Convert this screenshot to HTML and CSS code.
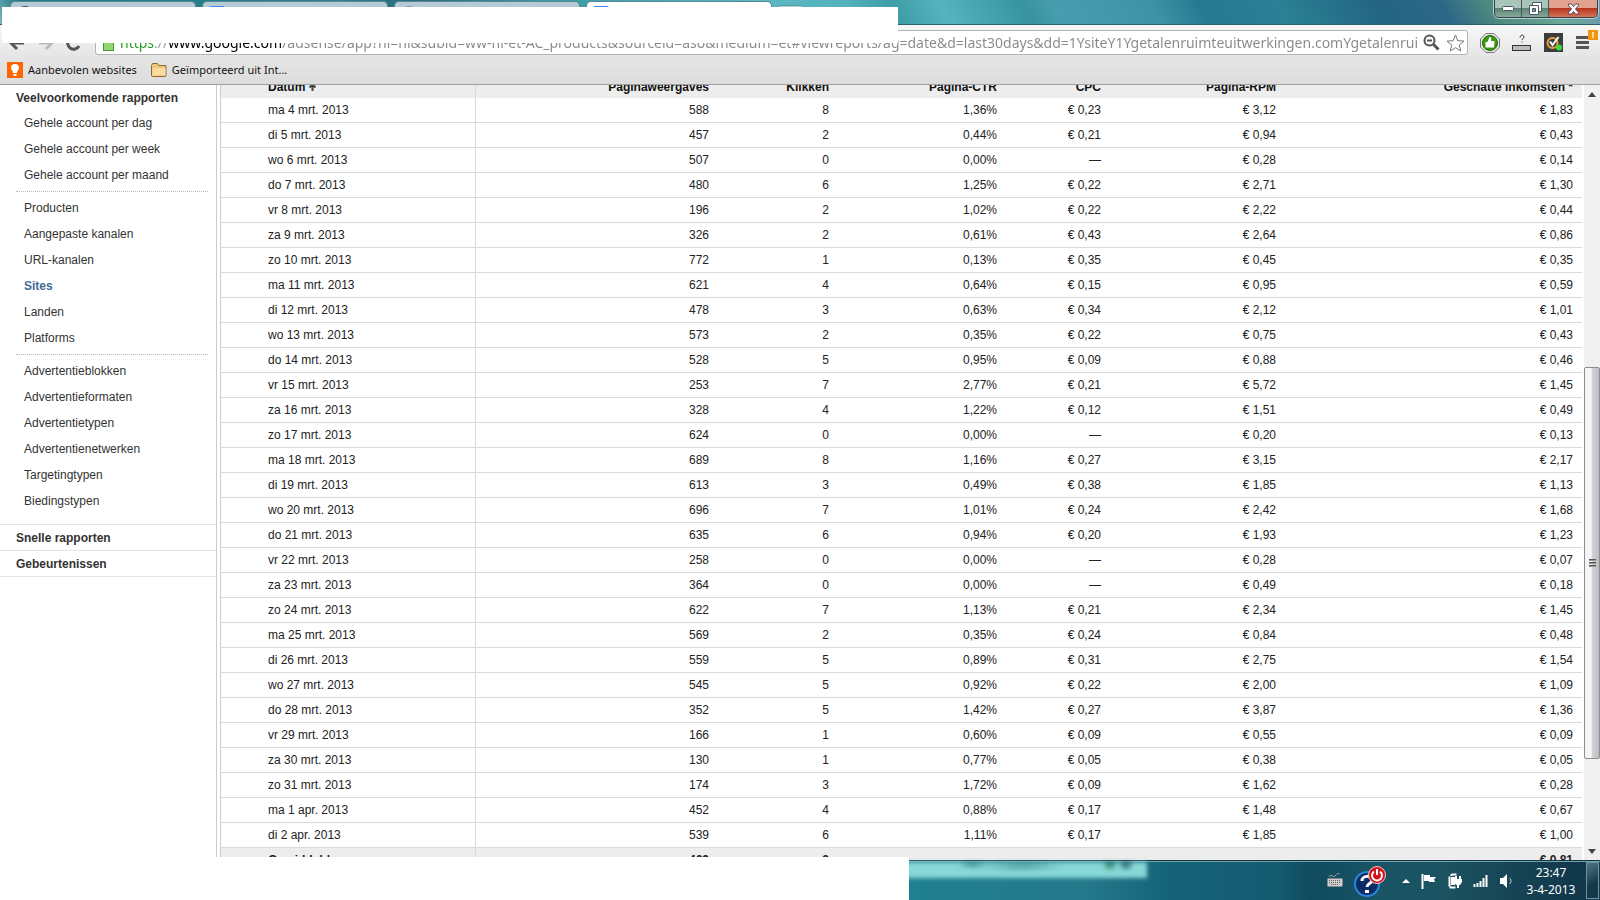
FILE: index.html
```html
<!DOCTYPE html>
<html lang="nl">
<head>
    <meta charset="UTF-8">
    <meta name="viewport" content="width=device-width, initial-scale=1.0">
    <title>Google AdSense</title>
    <link rel="stylesheet" href="styles.css">
</head>
<body>
    <!-- Browser window -->
    <header class="browser">
        <div class="titlebar">
            <div class="tabs">
                <div class="tab"><span class="favicon dark"></span></div>
                <div class="tab"><span class="favicon blue"></span></div>
                <div class="tab"><span class="favicon grey"></span></div>
                <div class="tab active"><span class="favicon blue"></span></div>
                <div class="new-tab"></div>
            </div>
            <div class="window-buttons">
                <button class="win-button" aria-label="Minimaliseren">
                    <svg width="12" height="6" viewBox="0 0 12 6"><rect x="0.5" y="0.5" width="11" height="4" rx="1" fill="#fff" stroke="#4a5566"/></svg>
                </button>
                <button class="win-button" aria-label="Verkleinen">
                    <svg width="13" height="13" viewBox="0 0 13 13"><path d="M3.500 0.500h9v9h-9z" fill="#fff" stroke="#4a5566"/><path d="M0.500 3.500h9v9h-9z" fill="#fff" stroke="#4a5566"/><path d="M3.500 6.500h3v3h-3z" fill="#7a9a98" stroke="#4a5566"/></svg>
                </button>
                <button class="win-button close" aria-label="Sluiten">
                    <svg width="13" height="12" viewBox="0 0 13 12"><path d="M1.500 1h3l2 2.500 2-2.500h3v1.500L8.500 6l3 3.500V11h-3l-2-2.500-2 2.500h-3V9.500l3-3.500-3-3.500z" fill="#fff" stroke="#58485a"/></svg>
                </button>
            </div>
        </div>

        <div class="toolbar">
            <button class="nav-button" aria-label="Vorige">
                <svg width="18" height="16" viewBox="0 0 18 16"><path d="M16 8H4M9 2L3 8l6 6" fill="none" stroke="#555" stroke-width="3"/></svg>
            </button>
            <button class="nav-button" aria-label="Volgende">
                <svg width="18" height="16" viewBox="0 0 18 16"><path d="M2 8h12M9 2l6 6-6 6" fill="none" stroke="#bbb" stroke-width="3"/></svg>
            </button>
            <button class="nav-button" aria-label="Vernieuwen">
                <svg width="16" height="16" viewBox="0 0 16 16"><path d="M13 11A6 6 0 1 1 12 4" fill="none" stroke="#555" stroke-width="3"/><path d="M14 1v6H8z" fill="#555"/></svg>
            </button>
            <div class="omnibox">
                <svg width="11" height="16" viewBox="0 0 11 16"><path d="M2.500 7V4a3 3 0 0 1 6 0v3" fill="none" stroke="#777" stroke-width="2"/><rect x="0.5" y="6.500" width="10" height="9" fill="#92d66f" stroke="#4a9a32"/></svg>
                <input class="url" type="text" aria-label="Adres" value="https://www.google.com/adsense/app?hl=nl&amp;subid=ww-nl-et-AC_products&amp;sourceid=aso&amp;medium=et#viewreports/ag=date&amp;d=last30days&amp;dd=1YsiteY1Ygetalenruimteuitwerkingen.comYgetalenruimteuitwerkingen.com">
                <svg width="17" height="17" viewBox="0 0 17 17"><circle cx="6.500" cy="6.500" r="5" fill="#fff" stroke="#555" stroke-width="2"/><path d="M4 6.500h5" stroke="#555" stroke-width="2"/><path d="M10.500 10.500l5 5" stroke="#555" stroke-width="3"/></svg>
                <svg width="19" height="18" viewBox="0 0 19 18"><path d="M9.500 1l2.300 5.700 6.200.4-4.800 3.900 1.600 6-5.300-3.300L4.200 17l1.600-6L1 7.100l6.200-.4z" fill="#fff" stroke="#777"/></svg>
            </div>
            <button class="tool-button" aria-label="WOT">
                <svg width="20" height="20" viewBox="0 0 20 20"><path d="M6 .5h8L19.500 6v8L14 19.500H6L.5 14V6z" fill="#e8e8e8" stroke="#777"/><circle cx="10" cy="10" r="7.500" fill="#3a9a10" stroke="#1f6a05"/><path d="M5.500 9h2l2-5c2 0 1.800 2.500 1.500 4h3.500L14 14.500H5.500z" fill="#fff"/></svg>
            </button>
            <button class="tool-button" aria-label="PageRank">
                <svg width="20" height="18" viewBox="0 0 20 18"><path d="M8 3.500c0-3 4-3 4-.5 0 1.500-2 1.500-2 3" fill="none" stroke="#333"/><path d="M9.500 7.500h1v1h-1z" fill="#333"/><rect x="0.5" y="11.500" width="18" height="5" fill="#bbb" stroke="#333"/></svg>
            </button>
            <button class="tool-button" aria-label="Norton">
                <svg width="19" height="19" viewBox="0 0 19 19"><rect width="19" height="19" fill="#3c3c3c"/><circle cx="8.500" cy="10" r="5" fill="none" stroke="#e8a13a" stroke-width="2"/><path d="M6 8.500L8.500 12l6-8" fill="none" stroke="#fff" stroke-width="2"/><circle cx="15" cy="14.500" r="3" fill="#3ddc3d"/></svg>
            </button>
            <button class="menu-button" aria-label="Menu">
                <svg width="13" height="13" viewBox="0 0 13 13"><path d="M0 1.500h13M0 6.500h13M0 11.500h13" stroke="#555" stroke-width="3"/></svg>
                <span class="badge">!</span>
            </button>
        </div>

        <div class="bookmarks">
            <a class="bookmark" href="#">
                <svg width="16" height="16" viewBox="0 0 16 16"><rect width="16" height="16" fill="#f60"/><path d="M8 2a4 4 0 0 0-4 4c0 2 2 2.500 2 5h4c0-2.500 2-3 2-5a4 4 0 0 0-4-4zM6.500 12h3v2h-3z" fill="#fff"/></svg>
                <span>Aanbevolen websites</span>
            </a>
            <a class="bookmark" href="#">
                <svg width="16" height="14" viewBox="0 0 16 14"><path d="M.5 2.500l1-2h5l1 2h7.500v10a1 1 0 0 1-1 1h-12.500a1 1 0 0 1-1-1z" fill="#f0c674" stroke="#8a6a3a"/><path d="M1.500 5h13v7.500h-13z" fill="#fbdca0"/></svg>
                <span>Geïmporteerd uit Int...</span>
            </a>
        </div>
        <div class="cover cover-top"></div>
    </header>

    <main class="page">
        <!-- Report menu -->
        <nav class="sidebar">
            <h2>Veelvoorkomende rapporten</h2>
            <ul>
                <li><a href="#">Gehele account per dag</a></li>
                <li><a href="#">Gehele account per week</a></li>
                <li><a href="#">Gehele account per maand</a></li>
            </ul>
            <ul>
                <li><a href="#">Producten</a></li>
                <li><a href="#">Aangepaste kanalen</a></li>
                <li><a href="#">URL-kanalen</a></li>
                <li><a class="selected" href="#">Sites</a></li>
                <li><a href="#">Landen</a></li>
                <li><a href="#">Platforms</a></li>
            </ul>
            <ul>
                <li><a href="#">Advertentieblokken</a></li>
                <li><a href="#">Advertentieformaten</a></li>
                <li><a href="#">Advertentietypen</a></li>
                <li><a href="#">Advertentienetwerken</a></li>
                <li><a href="#">Targetingtypen</a></li>
                <li><a href="#">Biedingstypen</a></li>
            </ul>
            <div class="sections">
                <a href="#">Snelle rapporten</a>
                <a href="#">Gebeurtenissen</a>
            </div>
        </nav>

        <!-- Report table -->
        <div class="report">
            <table>
                <colgroup>
                    <col class="col-date"><col class="col-views"><col class="col-clicks"><col class="col-ctr"><col class="col-cpc"><col class="col-rpm"><col>
                </colgroup>
                <thead>
                    <tr><th>Datum <svg width="7" height="8" viewBox="0 0 7 8"><path d="M3.500 8V2M.5 4.500l3-3 3 3" fill="none" stroke="#444" stroke-width="2"/></svg></th><th>Paginaweergaves</th><th>Klikken</th><th>Pagina-CTR</th><th>CPC</th><th>Pagina-RPM</th><th>Geschatte inkomsten *</th></tr>
                </thead>
                <tbody>
                    <tr><td>ma 4 mrt. 2013</td><td>588</td><td>8</td><td>1,36%</td><td>€ 0,23</td><td>€ 3,12</td><td>€ 1,83</td></tr>
                    <tr><td>di 5 mrt. 2013</td><td>457</td><td>2</td><td>0,44%</td><td>€ 0,21</td><td>€ 0,94</td><td>€ 0,43</td></tr>
                    <tr><td>wo 6 mrt. 2013</td><td>507</td><td>0</td><td>0,00%</td><td>—</td><td>€ 0,28</td><td>€ 0,14</td></tr>
                    <tr><td>do 7 mrt. 2013</td><td>480</td><td>6</td><td>1,25%</td><td>€ 0,22</td><td>€ 2,71</td><td>€ 1,30</td></tr>
                    <tr><td>vr 8 mrt. 2013</td><td>196</td><td>2</td><td>1,02%</td><td>€ 0,22</td><td>€ 2,22</td><td>€ 0,44</td></tr>
                    <tr><td>za 9 mrt. 2013</td><td>326</td><td>2</td><td>0,61%</td><td>€ 0,43</td><td>€ 2,64</td><td>€ 0,86</td></tr>
                    <tr><td>zo 10 mrt. 2013</td><td>772</td><td>1</td><td>0,13%</td><td>€ 0,35</td><td>€ 0,45</td><td>€ 0,35</td></tr>
                    <tr><td>ma 11 mrt. 2013</td><td>621</td><td>4</td><td>0,64%</td><td>€ 0,15</td><td>€ 0,95</td><td>€ 0,59</td></tr>
                    <tr><td>di 12 mrt. 2013</td><td>478</td><td>3</td><td>0,63%</td><td>€ 0,34</td><td>€ 2,12</td><td>€ 1,01</td></tr>
                    <tr><td>wo 13 mrt. 2013</td><td>573</td><td>2</td><td>0,35%</td><td>€ 0,22</td><td>€ 0,75</td><td>€ 0,43</td></tr>
                    <tr><td>do 14 mrt. 2013</td><td>528</td><td>5</td><td>0,95%</td><td>€ 0,09</td><td>€ 0,88</td><td>€ 0,46</td></tr>
                    <tr><td>vr 15 mrt. 2013</td><td>253</td><td>7</td><td>2,77%</td><td>€ 0,21</td><td>€ 5,72</td><td>€ 1,45</td></tr>
                    <tr><td>za 16 mrt. 2013</td><td>328</td><td>4</td><td>1,22%</td><td>€ 0,12</td><td>€ 1,51</td><td>€ 0,49</td></tr>
                    <tr><td>zo 17 mrt. 2013</td><td>624</td><td>0</td><td>0,00%</td><td>—</td><td>€ 0,20</td><td>€ 0,13</td></tr>
                    <tr><td>ma 18 mrt. 2013</td><td>689</td><td>8</td><td>1,16%</td><td>€ 0,27</td><td>€ 3,15</td><td>€ 2,17</td></tr>
                    <tr><td>di 19 mrt. 2013</td><td>613</td><td>3</td><td>0,49%</td><td>€ 0,38</td><td>€ 1,85</td><td>€ 1,13</td></tr>
                    <tr><td>wo 20 mrt. 2013</td><td>696</td><td>7</td><td>1,01%</td><td>€ 0,24</td><td>€ 2,42</td><td>€ 1,68</td></tr>
                    <tr><td>do 21 mrt. 2013</td><td>635</td><td>6</td><td>0,94%</td><td>€ 0,20</td><td>€ 1,93</td><td>€ 1,23</td></tr>
                    <tr><td>vr 22 mrt. 2013</td><td>258</td><td>0</td><td>0,00%</td><td>—</td><td>€ 0,28</td><td>€ 0,07</td></tr>
                    <tr><td>za 23 mrt. 2013</td><td>364</td><td>0</td><td>0,00%</td><td>—</td><td>€ 0,49</td><td>€ 0,18</td></tr>
                    <tr><td>zo 24 mrt. 2013</td><td>622</td><td>7</td><td>1,13%</td><td>€ 0,21</td><td>€ 2,34</td><td>€ 1,45</td></tr>
                    <tr><td>ma 25 mrt. 2013</td><td>569</td><td>2</td><td>0,35%</td><td>€ 0,24</td><td>€ 0,84</td><td>€ 0,48</td></tr>
                    <tr><td>di 26 mrt. 2013</td><td>559</td><td>5</td><td>0,89%</td><td>€ 0,31</td><td>€ 2,75</td><td>€ 1,54</td></tr>
                    <tr><td>wo 27 mrt. 2013</td><td>545</td><td>5</td><td>0,92%</td><td>€ 0,22</td><td>€ 2,00</td><td>€ 1,09</td></tr>
                    <tr><td>do 28 mrt. 2013</td><td>352</td><td>5</td><td>1,42%</td><td>€ 0,27</td><td>€ 3,87</td><td>€ 1,36</td></tr>
                    <tr><td>vr 29 mrt. 2013</td><td>166</td><td>1</td><td>0,60%</td><td>€ 0,09</td><td>€ 0,55</td><td>€ 0,09</td></tr>
                    <tr><td>za 30 mrt. 2013</td><td>130</td><td>1</td><td>0,77%</td><td>€ 0,05</td><td>€ 0,38</td><td>€ 0,05</td></tr>
                    <tr><td>zo 31 mrt. 2013</td><td>174</td><td>3</td><td>1,72%</td><td>€ 0,09</td><td>€ 1,62</td><td>€ 0,28</td></tr>
                    <tr><td>ma 1 apr. 2013</td><td>452</td><td>4</td><td>0,88%</td><td>€ 0,17</td><td>€ 1,48</td><td>€ 0,67</td></tr>
                    <tr><td>di 2 apr. 2013</td><td>539</td><td>6</td><td>1,11%</td><td>€ 0,17</td><td>€ 1,85</td><td>€ 1,00</td></tr>
                </tbody>
                <tfoot>
                    <tr><td>Gemiddelden</td><td>469</td><td>3</td><td>—</td><td>—</td><td>—</td><td>€ 0,81</td></tr>
                </tfoot>
            </table>
        </div>

        <div class="scrollbar">
            <svg width="8" height="5" viewBox="0 0 8 5"><path d="M4 0l4 5H0z" fill="#444"/></svg>
            <div class="track">
                <div class="thumb"><i></i><i></i><i></i></div>
            </div>
            <svg width="8" height="5" viewBox="0 0 8 5"><path d="M0 0h8L4 5z" fill="#444"/></svg>
        </div>
    </main>

    <!-- Windows taskbar -->
    <footer class="taskbar">
        <div class="tray">
            <svg width="16" height="15" viewBox="0 0 16 15"><path d="M2 4c2-4 4 1 6-1s3-3 5-3" fill="none" stroke="#aaa"/><rect x="0.5" y="5.500" width="15" height="8" rx="1" fill="#ccc" stroke="#888"/><path d="M2 7.500h12M2 9.500h12M4 11.500h8" stroke="#666" stroke-dasharray="1 1"/></svg>
            <svg class="help" width="33" height="32" viewBox="0 0 33 32"><circle cx="13" cy="19" r="12" fill="#0c2c66" stroke="#2a86d8" stroke-width="2"/><path d="M8 16c0-6 10-6 10-1 0 4-5 3-5 7" fill="none" stroke="#fff" stroke-width="3"/><rect x="11" y="25" width="4" height="3" fill="#fff"/><circle cx="23" cy="10" r="8.500" fill="#d8101c" stroke="#f4c8c8"/><path d="M20 6.500a5 5 0 1 0 6 0M23 4v6" fill="none" stroke="#fff" stroke-width="2"/></svg>
            <svg width="8" height="4" viewBox="0 0 8 4"><path d="M4 0l4 4H0z" fill="#fff"/></svg>
            <svg width="16" height="16" viewBox="0 0 16 16"><path d="M1.500 1v15" stroke="#fff" stroke-width="2"/><path d="M3 2h6v2h6l-2 2.500L14 9H8V8H3z" fill="#fff"/></svg>
            <svg width="14" height="16" viewBox="0 0 14 16"><path d="M3.500 1.500h5M1.500 3.500v10M1.500 14.500h6M3.500 1v2" fill="none" stroke="#fff" stroke-width="2"/><path d="M3 4h4v8H3z" fill="#fff"/><path d="M8 3v4M12 3v4" stroke="#fff" stroke-width="2"/><path d="M6 6h8v3l-2 3h-1v3H9v-3H8L6 9z" fill="#fff"/></svg>
            <svg width="16" height="13" viewBox="0 0 16 13"><path d="M1.500 13v-3M4.500 13v-4M7.500 13V7M10.500 13V4M13.500 13V1" stroke="#fff" stroke-width="2"/></svg>
            <svg width="13" height="14" viewBox="0 0 13 14"><path d="M0 4h3l4-4v14l-4-4H0z" fill="#fff"/><path d="M9.500 4c2 2 2 4 0 6" fill="none" stroke="#ddd"/></svg>
        </div>
        <div class="clock">
            <span>23:47</span>
            <span>3-4-2013</span>
        </div>
        <button class="show-desktop" aria-label="Bureaublad weergeven"></button>
        <div class="cover cover-bottom"></div>
    </footer>
</body>
</html>
```
FILE: styles.css
```css
* {
    box-sizing: border-box;
}
body {
    display: flex;
    flex-direction: column;
    height: 100vh;
    margin: 0;
    overflow: hidden;
    background: #fff;
    color: #222;
    font: 12px "Liberation Sans", Arial, sans-serif;
}
a {
    color: inherit;
    text-decoration: none;
}
button {
    padding: 0;
    border: none;
    background: none;
}
svg {
    display: block;
    flex: none;
}
.cover {
    position: absolute;
    background: #fff;
}
.cover-top {
    top: 7px;
    left: 2px;
    width: 56%;
    height: 36px;
}
.cover-bottom {
    top: -4px;
    bottom: 0;
    left: 0;
    width: 909px;
}

/* Browser window */
.browser {
    position: relative;
    flex: none;
    border-bottom: 1px solid #a0a0a0;
    background: linear-gradient(#f8f8f8 25px, #e6e6e6 55px, #dcdcdc);
    font-family: "Noto Sans", "Open Sans", sans-serif;
}
.titlebar {
    display: flex;
    justify-content: space-between;
    height: 25px;
    border-bottom: 1px solid #28606e;
    background: linear-gradient(60deg, #83b3c0 0%, #1f7a88 2%, #2b8290 22%, #2b6a7c 27%, #3a98a2 34%, #5ab8c2 48%, #54b2bc 53%, #3f9ea8 56%, #55b3bd 59%, #3793a0 64%, #479dae 66%, #3f93a6 72%, #257a91 75%, #2a8094 80%, #236582 86%, #2d6787 90%, #4f8a80 93%, #6ba898 97%, #6b98b0 100%);
}
.tabs {
    display: flex;
    gap: 6px;
    padding: 1px 0 0 10px;
}
.tab {
    width: 186px;
    padding: 4px 6px 0;
    border: 1px solid #5b8792;
    border-bottom: none;
    border-radius: 5px 5px 0 0;
    background: #b4cbd5;
}
.tab.active {
    background: #fff;
}
.favicon {
    display: block;
    width: 16px;
    height: 16px;
    border-radius: 2px;
}
.favicon.blue {
    background: #4285f4;
}
.favicon.dark {
    border-radius: 8px;
    background: #444;
}
.favicon.grey {
    border-radius: 8px;
    background: #8094b8;
}
.new-tab {
    width: 26px;
    height: 16px;
    margin-top: 4px;
    border: 1px solid #5b9aa3;
    border-radius: 3px;
    background: #a5d3d9;
}
.window-buttons {
    display: flex;
    height: 18px;
    margin-right: 2px;
    border: 1px solid #34444e;
    border-top: none;
    border-radius: 0 0 5px 5px;
    box-shadow: 0 0 0 1px #b7ccd0;
    overflow: hidden;
}
.win-button {
    display: flex;
    align-items: center;
    justify-content: center;
    width: 27px;
    border-right: 1px solid #43585e;
    background: linear-gradient(#a9c4b9 45%, #5c8474 50%, #86ac99);
}
.win-button.close {
    width: 48px;
    border-right: none;
    background: linear-gradient(#e0a18e 45%, #b83520 50%, #d4745a);
}
.toolbar {
    display: flex;
    align-items: center;
    gap: 12px;
    padding: 5px 4px 0 8px;
}
.nav-button {
    width: 17px;
}
.omnibox {
    display: flex;
    flex: 1;
    align-items: center;
    gap: 6px;
    min-width: 0;
    height: 25px;
    padding: 0 2px 0 7px;
    border: 1px solid #b4b4b4;
    border-radius: 3px;
    background: #fff;
}
/* scheme green, host black, the rest grey */
.url {
    flex: 1;
    min-width: 0;
    padding: 0;
    border: none;
    background: linear-gradient(90deg, #1a9a1a 34px, #999 34px, #999 48px, #000 48px, #000 161px, #888 161px);
    -webkit-background-clip: text;
    background-clip: text;
    color: transparent;
    font: 14px "Noto Sans", "Open Sans", sans-serif;
}
.tool-button {
    width: 20px;
}
.menu-button {
    position: relative;
    width: 20px;
}
.badge {
    position: absolute;
    top: -6px;
    right: -2px;
    width: 10px;
    height: 10px;
    background: #f0960a;
    color: #fff;
    font: bold 9px/10px "Liberation Sans", Arial, sans-serif;
}
.bookmarks {
    display: flex;
    gap: 14px;
    height: 29px;
    padding: 0 7px;
}
.bookmark {
    display: flex;
    align-items: center;
    gap: 5px;
    color: #111;
    font-size: 11px;
}

/* Report page */
.page {
    display: flex;
    flex: 1;
    min-height: 0;
    overflow: hidden;
}
.sidebar {
    flex: none;
    width: 217px;
    border-right: 1px solid #ccc;
    color: #333;
}
.sidebar h2 {
    margin: 0 0 0 16px;
    padding-top: 1px;
    font-size: 12px;
    line-height: 24px;
}
.sidebar ul {
    margin: 0 8px 0 16px;
    padding: 0 0 3px 8px;
    list-style: none;
}
.sidebar ul + ul {
    padding-top: 3px;
    border-top: 1px dotted #bbb;
}
.sidebar li {
    line-height: 26px;
}
.sidebar .selected {
    color: #436899;
    font-weight: bold;
}
.sections {
    margin-top: 7px;
    border-top: 1px solid #e5e5e5;
}
.sections a {
    display: block;
    padding: 1px 0 0 16px;
    border-bottom: 1px solid #e5e5e5;
    font-weight: bold;
    line-height: 24px;
}
.report {
    flex: 1;
    min-width: 0;
    margin: 0 2px 0 3px;
    border-left: 1px solid #ccc;
}
/* the page is scrolled a little past the table head */
table {
    width: 100%;
    margin-top: -12px;
    border-collapse: separate;
    border-spacing: 0;
    table-layout: fixed;
}
.col-date {
    width: 255px;
}
.col-views {
    width: 243px;
}
.col-clicks {
    width: 120px;
}
.col-ctr {
    width: 168px;
}
.col-cpc {
    width: 104px;
}
.col-rpm {
    width: 175px;
}
th, td {
    height: 25px;
    padding: 0 10px 0 0;
    border-bottom: 1px solid #d9d9d9;
    line-height: 24px;
    text-align: right;
    white-space: nowrap;
}
th {
    padding-top: 4px;
    border-bottom: none;
    background: #ededed;
    color: #111;
    line-height: 21px;
}
th svg {
    display: inline;
}
th:first-child, td:first-child {
    padding-left: 47px;
    border-right: 1px solid #d9d9d9;
    text-align: left;
}
th:last-child, td:last-child {
    padding-right: 9px;
}
tfoot td {
    background: #ededed;
    font-weight: bold;
    line-height: 23px;
}
.scrollbar {
    display: flex;
    flex: none;
    flex-direction: column;
    align-items: center;
    width: 16px;
    padding: 7px 0 6px;
    background: #f0f0f0;
}
.track {
    flex: 1;
    width: 100%;
    padding-top: 270px;
}
.thumb {
    display: flex;
    flex-direction: column;
    align-items: center;
    justify-content: center;
    gap: 1px;
    height: 392px;
    border: 1px solid #8e8e8e;
    border-radius: 2px;
    background: linear-gradient(90deg, #f5f5f5 45%, #d4d4d8 50%, #bbbbc2);
}
.thumb i {
    width: 7px;
    height: 2px;
    border-top: 1px solid #555;
    background: #999;
}

/* Windows taskbar */
.taskbar {
    position: relative;
    display: flex;
    flex: none;
    align-items: center;
    justify-content: flex-end;
    height: 40px;
    border-top: 1px solid #16323c;
    background: linear-gradient(90deg, #1f8090 57%, #24788a 68%, #156378 73%, #145a70 80%, #104a5e 82%, #185565 86%, #1c5362 90%, #12394b 98%);
    box-shadow: inset 0 1px #6fa3ad;
    color: #fff;
}
/* glow of the window behind the glass */
.taskbar::before {
    position: absolute;
    top: 1px;
    left: 54%;
    width: 283px;
    height: 16px;
    background:
        radial-gradient(ellipse 16px 4px at 109px 3px, #3f8f90, transparent),
        radial-gradient(ellipse 44px 6px at 158px 4px, #4f9fa0, transparent),
        radial-gradient(ellipse 8px 6px at 246px 3px, #207858, transparent),
        radial-gradient(ellipse 8px 6px at 262px 3px, #205860, transparent),
        #88d8d8;
    filter: blur(2px);
    content: "";
}
.tray {
    display: flex;
    align-items: center;
    gap: 11px;
    margin-right: 3px;
}
.help {
    margin-right: 4px;
}
.clock {
    display: flex;
    flex-direction: column;
    width: 70px;
    font: 12px/17px "Noto Sans", "Open Sans", sans-serif;
    text-align: center;
}
.show-desktop {
    width: 13px;
    height: 37px;
    margin-right: 1px;
    border: 1px solid #6f939d;
    background: linear-gradient(150deg, #4f7882, #16394a 60%);
}
```
